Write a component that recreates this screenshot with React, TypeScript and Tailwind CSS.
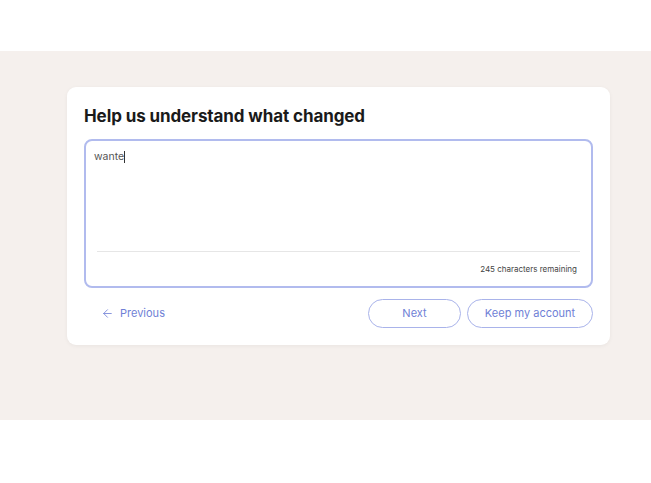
import { ArrowLeft } from 'lucide-react'

export default function App() {
  return (
    <div className="w-[651px] h-[483px] bg-white font-['Inter',sans-serif]">
      <div className="h-[51px]" />
      <section className="h-[369px] bg-[#f5f0ed] pt-[36px] pl-[67px]">
        <div className="w-[543px] h-[258px] bg-white rounded-[9px] shadow-[0_1px_4px_rgba(0,0,0,0.05)] px-[17px] pt-[19px]">
          <h2 className="text-[17px] leading-[20px] font-bold text-[#1a1a1a] tracking-[-0.1px]">
            Help us understand what changed
          </h2>
          <div className="mt-[13px] h-[149px] rounded-[8px] border-2 border-[#b1bbee] pt-[9px] pb-[12px] flex flex-col">
            <div className="pl-[8px] text-[10.5px] leading-[14px] text-[#555] flex items-center">
              wante<span className="inline-block w-px h-[12px] bg-[#333]" />
            </div>
            <div className="flex-1" />
            <div className="mx-[11px] h-px bg-[#e6e6e6]" />
            <div className="mt-[12px] text-right text-[8px] leading-[10px] text-[#444] pr-[14px]">
              245 characters remaining
            </div>
          </div>
          <div className="mt-[11px] flex items-center">
            <button className="flex items-center gap-[6px] pl-[17px] text-[11px] text-[#6f7fd6]">
              <ArrowLeft className="w-[13px] h-[13px]" strokeWidth={1.5} />
              Previous
            </button>
            <div className="flex-1" />
            <button className="w-[93px] h-[29px] rounded-full border border-[#a9b3ea] text-[11px] text-[#6f7fd6]">
              Next
            </button>
            <button className="ml-[6px] w-[126px] h-[29px] rounded-full border border-[#a9b3ea] text-[11px] text-[#6f7fd6]">
              Keep my account
            </button>
          </div>
        </div>
      </section>
    </div>
  )
}
